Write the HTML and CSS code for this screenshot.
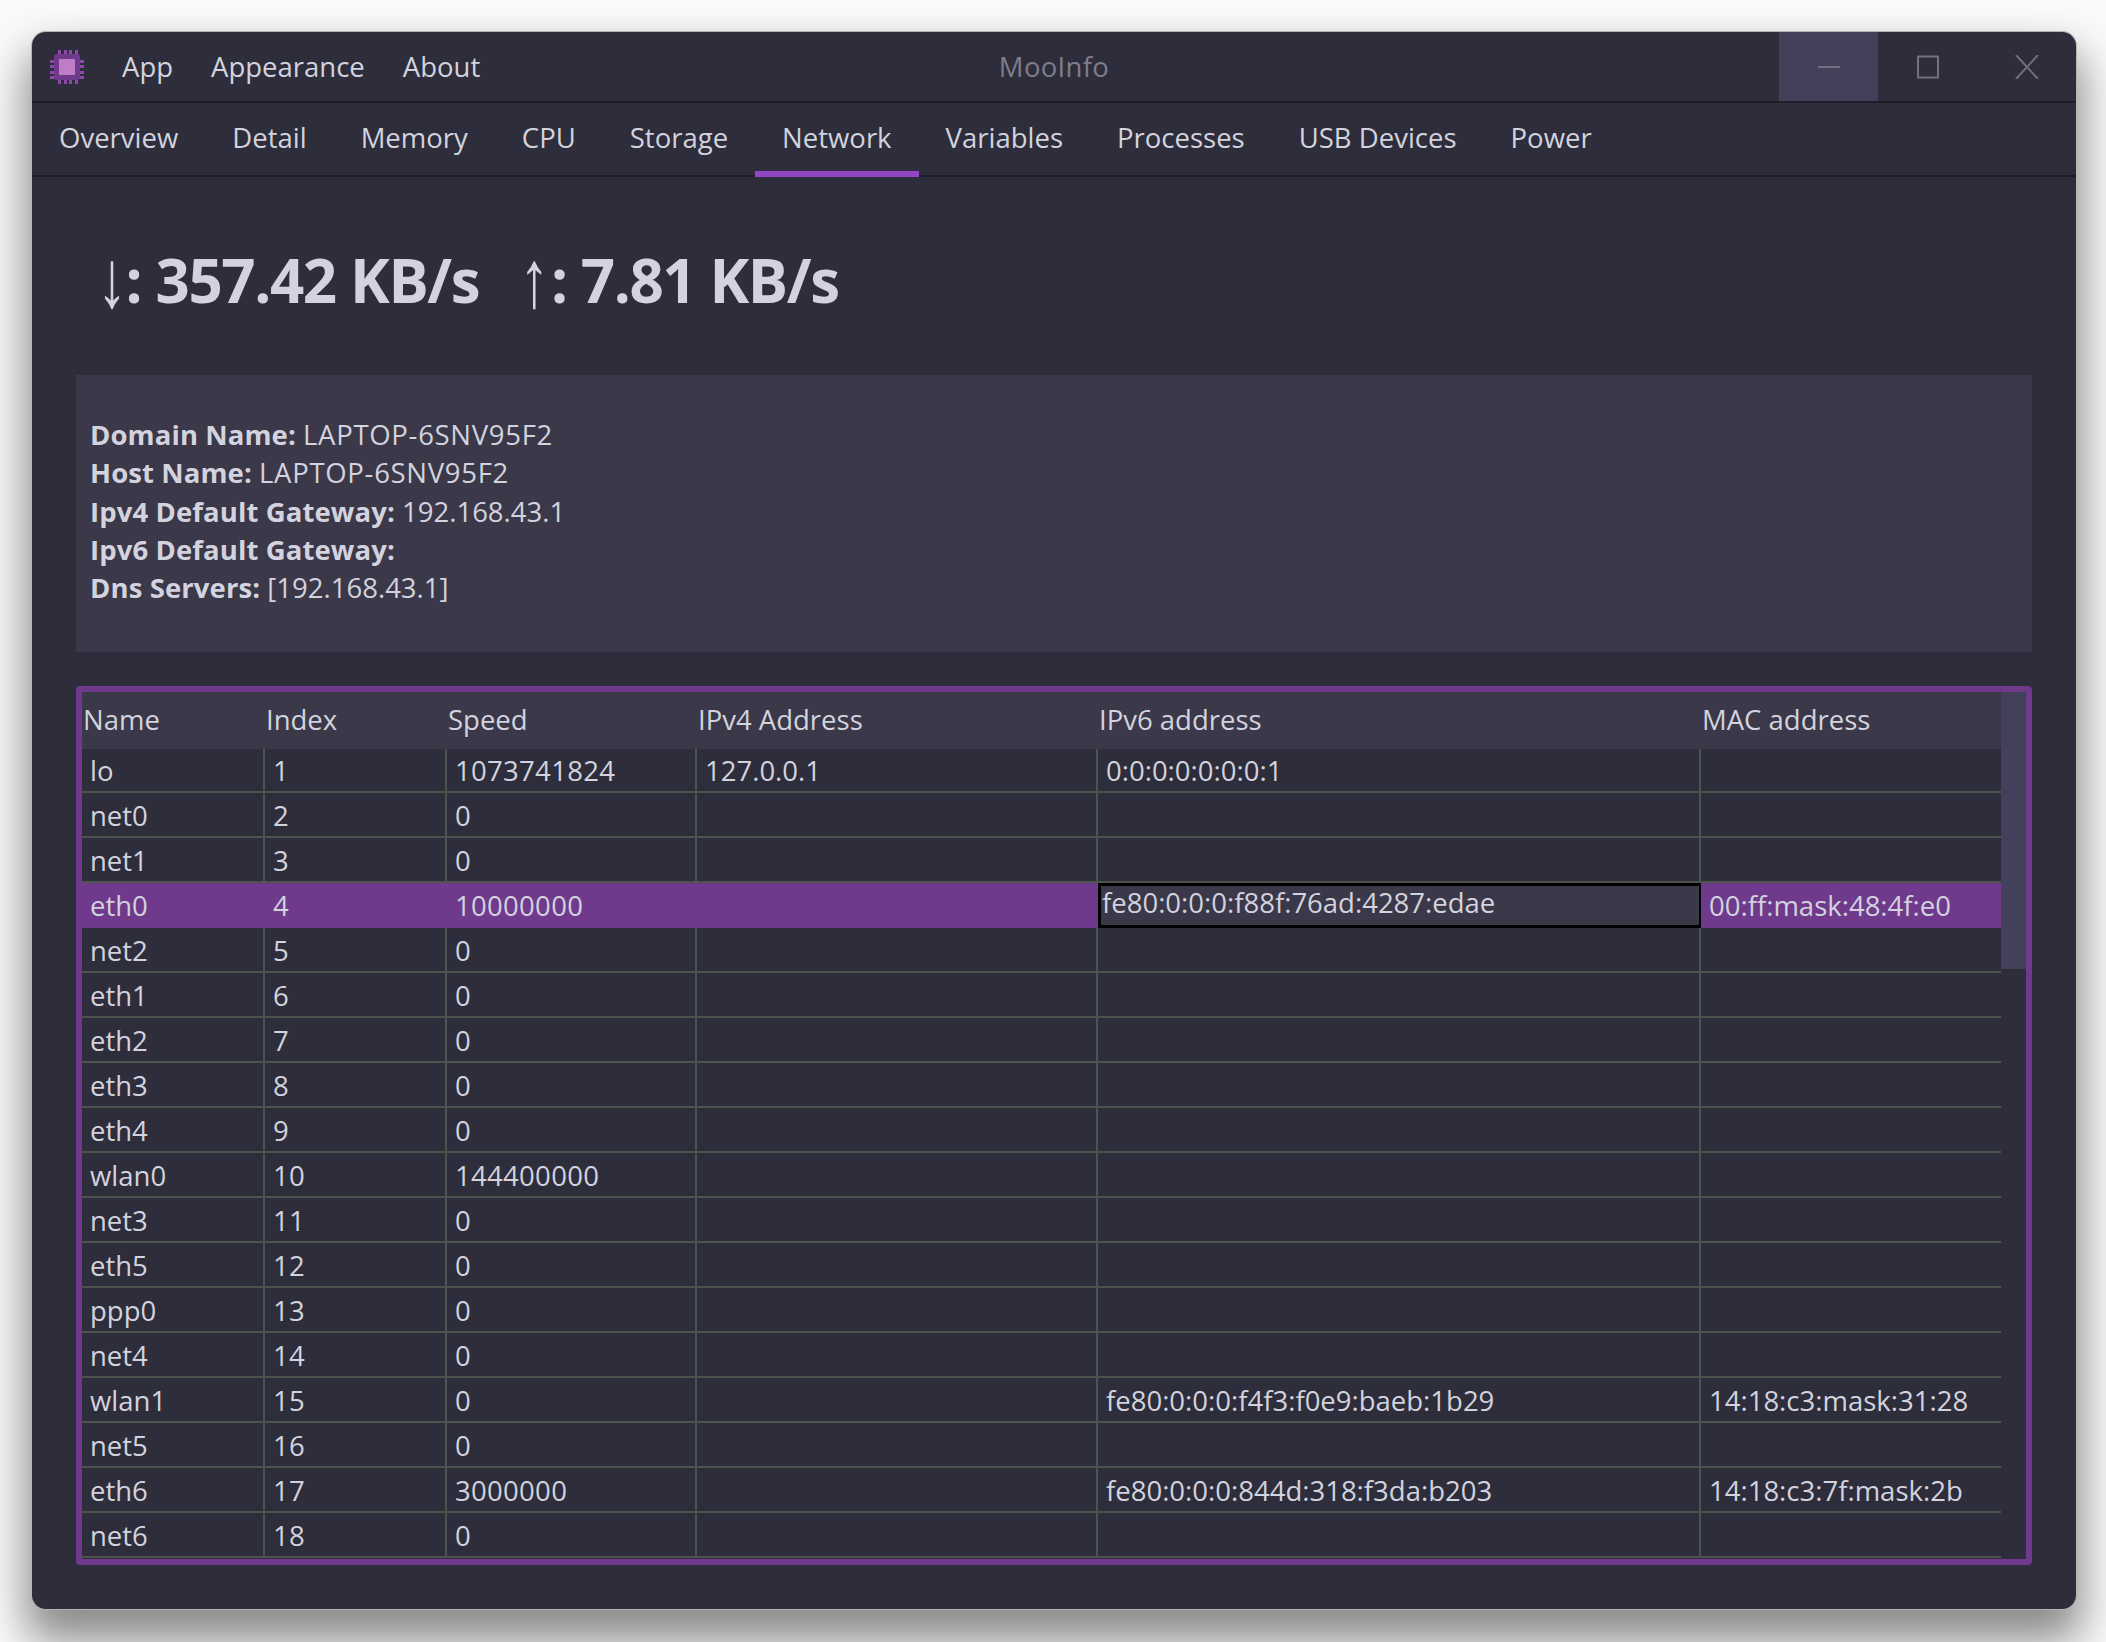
FILE: index.html
```html
<!DOCTYPE html>
<html lang="en">
<head>
    <meta charset="UTF-8">
    <title>MooInfo</title>
    <link rel="stylesheet" href="styles.css">
</head>
<body>
    <div class="window">
        <header class="titlebar">
            <svg class="logo" viewBox="0 0 34 34" width="34" height="34">
                <g fill="#8e48a8">
                    <rect x="8" y="0" width="3" height="34"/><rect x="14" y="0" width="3" height="34"/>
                    <rect x="19" y="0" width="3" height="34"/><rect x="25" y="0" width="3" height="34"/>
                    <rect x="0" y="10" width="34" height="3"/><rect x="0" y="15" width="34" height="3"/>
                    <rect x="0" y="21" width="34" height="3"/><rect x="0" y="26" width="34" height="3"/>
                </g>
                <rect x="4" y="4" width="26" height="26" rx="3" fill="#6f3a8c"/>
                <rect x="9" y="9" width="16" height="16" fill="#c07cc4"/>
            </svg>
            <nav class="menu">
                <span>App</span>
                <span>Appearance</span>
                <span>About</span>
            </nav>
            <div class="title">MooInfo</div>
            <div class="controls">
                <div class="ctrl ctrl-hover">
                    <svg viewBox="0 0 24 24" width="24" height="24"><path d="M1 12H23"/></svg>
                </div>
                <div class="ctrl">
                    <svg viewBox="0 0 24 24" width="24" height="24"><path d="M2 1.5H22V22.5H2Z"/></svg>
                </div>
                <div class="ctrl">
                    <svg viewBox="0 0 24 24" width="24" height="24"><path d="M1 0L23 24M23 0L1 24"/></svg>
                </div>
            </div>
        </header>

        <nav class="tabs">
            <a>Overview</a>
            <a>Detail</a>
            <a>Memory</a>
            <a>CPU</a>
            <a>Storage</a>
            <a class="active">Network</a>
            <a>Variables</a>
            <a>Processes</a>
            <a>USB Devices</a>
            <a>Power</a>
        </nav>

        <main class="content">
            <h1 class="speed"><span class="arrow">↓</span>: 357.42 KB/s <span class="arrow second">↑</span>: 7.81 KB/s</h1>

            <section class="info">
                <p><b>Domain Name:</b> <span class="host">LAPTOP-6SNV95F2</span></p>
                <p><b>Host Name:</b> <span class="host">LAPTOP-6SNV95F2</span></p>
                <p><b>Ipv4 Default Gateway:</b> 192.168.43.1</p>
                <p><b>Ipv6 Default Gateway:</b></p>
                <p><b>Dns Servers:</b> [192.168.43.1]</p>
            </section>

            <section class="grid-box">
                <table class="grid">
                    <colgroup>
                        <col class="c-name"><col class="c-index"><col class="c-speed">
                        <col class="c-ipv4"><col class="c-ipv6"><col class="c-mac">
                    </colgroup>
                    <thead>
                        <tr><th>Name</th><th>Index</th><th>Speed</th><th>IPv4 Address</th><th>IPv6 address</th><th>MAC address</th></tr>
                    </thead>
                    <tbody>
                        <tr><td>lo</td><td>1</td><td>1073741824</td><td>127.0.0.1</td><td>0:0:0:0:0:0:0:1</td><td></td></tr>
                        <tr><td>net0</td><td>2</td><td>0</td><td></td><td></td><td></td></tr>
                        <tr><td>net1</td><td>3</td><td>0</td><td></td><td></td><td></td></tr>
                        <tr class="selected"><td>eth0</td><td>4</td><td>10000000</td><td></td><td class="current">fe80:0:0:0:f88f:76ad:4287:edae</td><td>00:ff:mask:48:4f:e0</td></tr>
                        <tr><td>net2</td><td>5</td><td>0</td><td></td><td></td><td></td></tr>
                        <tr><td>eth1</td><td>6</td><td>0</td><td></td><td></td><td></td></tr>
                        <tr><td>eth2</td><td>7</td><td>0</td><td></td><td></td><td></td></tr>
                        <tr><td>eth3</td><td>8</td><td>0</td><td></td><td></td><td></td></tr>
                        <tr><td>eth4</td><td>9</td><td>0</td><td></td><td></td><td></td></tr>
                        <tr><td>wlan0</td><td>10</td><td>144400000</td><td></td><td></td><td></td></tr>
                        <tr><td>net3</td><td>11</td><td>0</td><td></td><td></td><td></td></tr>
                        <tr><td>eth5</td><td>12</td><td>0</td><td></td><td></td><td></td></tr>
                        <tr><td>ppp0</td><td>13</td><td>0</td><td></td><td></td><td></td></tr>
                        <tr><td>net4</td><td>14</td><td>0</td><td></td><td></td><td></td></tr>
                        <tr><td>wlan1</td><td>15</td><td>0</td><td></td><td>fe80:0:0:0:f4f3:f0e9:baeb:1b29</td><td>14:18:c3:mask:31:28</td></tr>
                        <tr><td>net5</td><td>16</td><td>0</td><td></td><td></td><td></td></tr>
                        <tr><td>eth6</td><td>17</td><td>3000000</td><td></td><td>fe80:0:0:0:844d:318:f3da:b203</td><td>14:18:c3:7f:mask:2b</td></tr>
                        <tr><td>net6</td><td>18</td><td>0</td><td></td><td></td><td></td></tr>
                    </tbody>
                </table>
                <div class="scrollbar"><div class="thumb"></div></div>
            </section>
        </main>
    </div>
</body>
</html>
```

FILE: styles.css
```css
html {
    overflow: hidden;
}

body {
    margin: 0;
    padding: 32px 30px 33px 32px;
    height: 1642px;
    box-sizing: border-box;
    background-color: #fafafa;
    font-family: "Open Sans", "Noto Sans", sans-serif;
    font-size: 27.5px;
    color: #d2d3de;
}

.window {
    height: 100%;
    display: flex;
    flex-direction: column;
    background-color: #2e2d3b;
    border-radius: 14px;
    overflow: hidden;
    box-shadow: 0 0 0 1px #b4b4b4, 0 26px 44px 6px rgba(0, 0, 0, 0.45);
}

.titlebar {
    height: 71px;
    flex: none;
    box-sizing: border-box;
    display: flex;
    align-items: center;
    border-bottom: 2px solid #1e1d28;
    position: relative;
}

.logo {
    flex: none;
    margin-left: 18px;
}

.menu {
    display: flex;
    gap: 38px;
    margin-left: 38px;
}

.title {
    position: absolute;
    left: 0;
    right: 0;
    text-align: center;
    color: #7e7d8c;
    letter-spacing: 0.3px;
    pointer-events: none;
}

.controls {
    display: flex;
    margin-left: auto;
    align-self: stretch;
}

.ctrl {
    width: 99px;
    display: flex;
    align-items: center;
    justify-content: center;
}

.ctrl-hover {
    background-color: #42405a;
}

.ctrl svg path {
    fill: none;
    stroke: #70707f;
    stroke-width: 2;
}

.tabs {
    height: 74px;
    flex: none;
    box-sizing: border-box;
    display: flex;
    border-bottom: 2px solid #1e1d28;
}

.tabs a {
    padding: 0 27px;
    height: 74px;
    line-height: 70px;
    box-sizing: border-box;
}

.tabs a.active {
    border-bottom: 6px solid #8f45c4;
}

.content {
    flex: 1;
    min-height: 0;
    display: flex;
    flex-direction: column;
    padding: 0 44px 44px;
}

.speed {
    margin: 0;
    height: 198px;
    line-height: 206px;
    flex: none;
    font-size: 60px;
    font-weight: 700;
    letter-spacing: -1.4px;
    white-space: pre;
    padding-left: 21px;
}

.arrow {
    display: inline-block;
    font-family: "Liberation Sans", sans-serif;
    font-weight: 400;
    line-height: 1;
    transform: translateY(-3px) scaleY(1.35);
}

.second {
    margin-left: 26px;
    margin-right: 3px;
}

.info {
    height: 277px;
    flex: none;
    box-sizing: border-box;
    background-color: #3a3849;
    padding: 41px 14px 0;
    margin-bottom: 34px;
}

.info p {
    margin: 0;
    height: 38.3px;
    line-height: 38px;
}

.info b {
    font-weight: 700;
    letter-spacing: 0.1px;
}

.host {
    letter-spacing: 0.7px;
}

.grid-box {
    flex: 1;
    min-height: 0;
    display: flex;
    border: 6px solid #6f3a8c;
    border-radius: 4px;
}

.grid {
    width: 1919px;
    flex: none;
    table-layout: fixed;
    border-collapse: separate;
    border-spacing: 0;
    align-self: flex-start;
}

.c-name { width: 183px; }
.c-index { width: 182px; }
.c-speed { width: 250px; }
.c-ipv4 { width: 401px; }
.c-ipv6 { width: 603px; }
.c-mac { width: 300px; }

.grid th {
    height: 57px;
    padding: 0 0 2px 1px;
    box-sizing: border-box;
    background-color: #3a3849;
    font-weight: 400;
    text-align: left;
    line-height: 1;
}

.grid td {
    height: 45px;
    box-sizing: border-box;
    padding: 2px 0 0 8px;
    line-height: 1;
    white-space: nowrap;
    border-right: 2px solid #4f5350;
    border-bottom: 2px solid #4f5350;
}

.grid td:nth-child(2),
.grid td:nth-child(3) {
    letter-spacing: 0.3px;
}

.grid td:last-child {
    border-right: none;
}

.grid tbody tr:first-child td {
    height: 44px;
}

.selected td {
    background-color: #6f3a8c;
    border-color: #6f3a8c;
}

.selected td.current {
    padding: 0 0 6px 1px;
    background-color: #3a3849;
    border: 3px solid #000;
    border-right-width: 2px;
}

.scrollbar {
    flex: 1;
}

.thumb {
    height: 277px;
    background-color: #42405a;
}
```
